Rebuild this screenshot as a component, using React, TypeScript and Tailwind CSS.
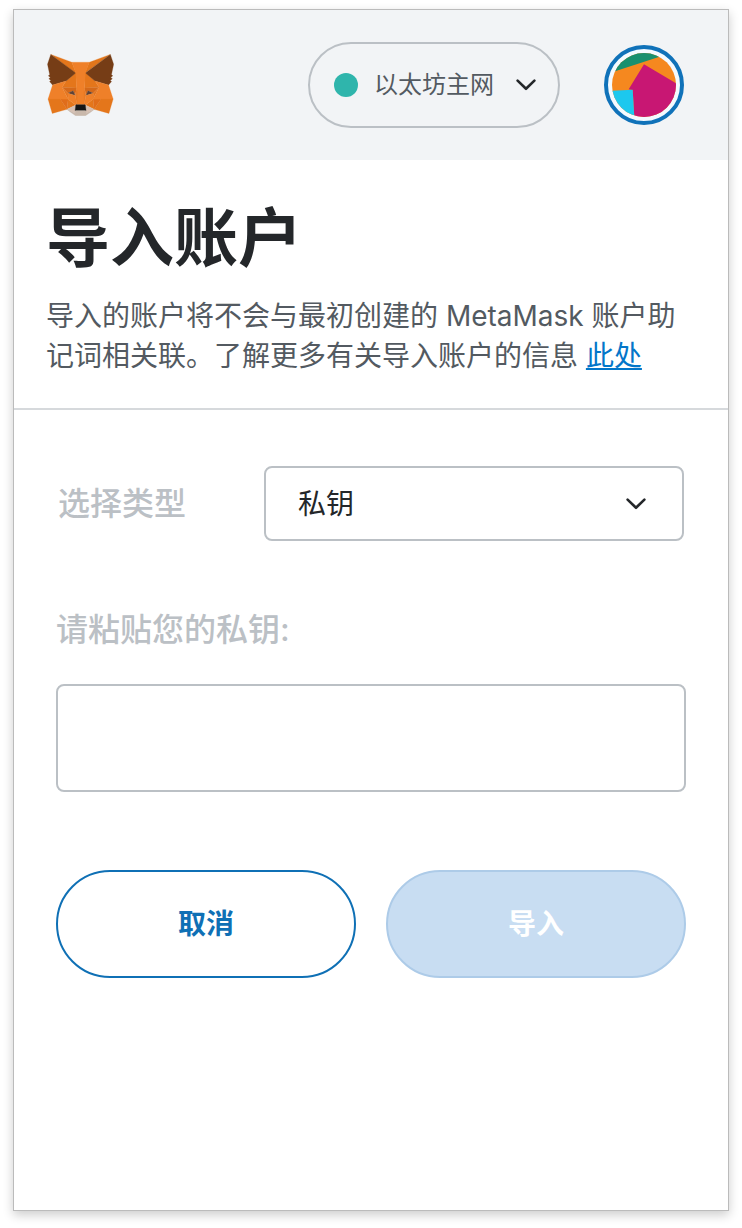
import { useState } from "react";

type Facet = { fill: string; points: string };

const foxFacets: Facet[] = [
  { fill: "#e2761b", points: "274.1,35.5 174.6,109.4 193,65.8" },
  { fill: "#e4761b", points: "44.4,35.5 143.1,110.1 125.6,65.8" },
  { fill: "#e4761b", points: "238.3,206.8 211.8,247.4 268.5,263 284.8,207.7" },
  { fill: "#e4761b", points: "33.9,207.7 50.1,263 106.8,247.4 80.3,206.8" },
  { fill: "#e4761b", points: "103.6,138.2 87.8,162.1 144.1,164.6 142.1,104.1" },
  { fill: "#e4761b", points: "214.9,138.2 175.9,103.4 174.6,164.6 230.8,162.1" },
  { fill: "#e4761b", points: "106.8,247.4 140.6,230.9 111.4,208.1" },
  { fill: "#e4761b", points: "177.9,230.9 211.8,247.4 207.1,208.1" },
  { fill: "#d7c1b3", points: "211.8,247.4 177.9,230.9 180.6,253 180.3,262.3" },
  { fill: "#d7c1b3", points: "106.8,247.4 138.3,262.3 138.1,253 140.6,230.9" },
  { fill: "#e06d1a", points: "106.8,247.4 111.6,206.8 80.3,207.7" },
  { fill: "#e06d1a", points: "207,206.8 211.8,247.4 238.3,207.7" },
  { fill: "#d5691a", points: "230.8,162.1 174.6,164.6 179.8,193.5 188.1,176.1 208.1,185.2" },
  { fill: "#d5691a", points: "110.6,185.2 130.6,176.1 138.8,193.5 144.1,164.6 87.8,162.1" },
  { fill: "#5d4338", points: "138.8,193.5 110.6,185.2 130.5,176.1" },
  { fill: "#5d4338", points: "179.7,193.5 188,176.1 208,185.2" },
  { fill: "#e4751f", points: "87.8,162.1 111.4,208.1 110.6,185.2" },
  { fill: "#e4751f", points: "208.1,185.2 207.1,208.1 230.8,162.1" },
  { fill: "#ef8029", points: "179.8,193.5 173.1,227.6 177.9,230.9 207.1,208.1 208.1,185.2" },
  { fill: "#ef8029", points: "110.6,185.2 111.4,208.1 140.6,230.9 145.4,227.6 138.8,193.5" },
  {
    fill: "#c9b8ab",
    points:
      "180.3,262.3 180.6,253 178.1,250.8 140.4,250.8 138.1,253 138.3,262.3 106.8,247.4 117.8,256.4 140.1,271.9 178.4,271.9 200.8,256.4 211.8,247.4",
  },
  {
    fill: "#161616",
    points: "177.9,230.9 173.1,227.6 145.4,227.6 140.6,230.9 138.1,253 140.4,250.8 178.1,250.8 180.6,253",
  },
  {
    fill: "#763d16",
    points:
      "278.3,114.2 286.8,73.4 274.1,35.5 177.9,106.9 214.9,138.2 267.2,153.5 278.8,140 273.8,136.4 281.8,129.1 275.6,124.3 283.6,118.2",
  },
  {
    fill: "#763d16",
    points:
      "31.8,73.4 40.3,114.2 34.9,118.2 42.9,124.3 36.8,129.1 44.8,136.4 39.8,140 51.3,153.5 103.6,138.2 140.6,106.9 44.4,35.5",
  },
  { fill: "#ef8029", points: "267.2,153.5 214.9,138.2 230.8,162.1 207.1,208.1 238.3,207.7 284.8,207.7" },
  { fill: "#ef8029", points: "103.6,138.2 51.3,153.5 33.9,207.7 80.3,207.7 111.4,208.1 87.8,162.1" },
  {
    fill: "#ef8029",
    points:
      "174.6,164.6 177.9,106.9 193.1,65.8 125.6,65.8 140.6,106.9 144.1,164.6 145.3,182.8 145.4,227.6 173.1,227.6 173.3,182.8",
  },
  { fill: "#e97a24", points: "144.1,164.6 138.8,193.5 145.4,227.6 146.9,182.7" },
  { fill: "#e97a24", points: "174.6,164.6 171.9,182.6 173.1,227.6 179.8,193.5" },
];

function FoxLogo() {
  return (
    <svg viewBox="30 34 258 239" className="h-[62px] w-[67px]" role="img" aria-label="MetaMask">
      {foxFacets.map((facet) => (
        <polygon
          key={facet.points}
          fill={facet.fill}
          stroke={facet.fill}
          strokeWidth="1"
          strokeLinejoin="round"
          points={facet.points}
        />
      ))}
    </svg>
  );
}

function AccountAvatar() {
  return (
    <svg viewBox="48 51 192 192" className="size-16 rounded-full" aria-hidden="true">
      <rect x="48" y="51" width="192" height="192" fill="#f5881f" />
      <polygon points="48,51 225,51 48,109" fill="#18906f" />
      <polygon points="144,85 240,142 240,243 115,243 110,162 98,160" fill="#c81773" />
      <polygon points="48,164 110,161 115,243 48,243" fill="#1cc8ee" />
    </svg>
  );
}

function Chevron({ className }: { className?: string }) {
  return (
    <svg
      viewBox="0 0 20 12"
      className={className}
      fill="none"
      stroke="#24272a"
      strokeWidth="2.6"
      strokeLinecap="round"
      strokeLinejoin="round"
      aria-hidden="true"
    >
      <path d="M1.6 1.6 10 9.8l8.4-8.2" />
    </svg>
  );
}

export default function App() {
  const [type, setType] = useState("private-key");
  const [privateKey, setPrivateKey] = useState("");

  return (
    <div className="flex min-h-screen flex-col bg-white px-[13px] pt-[9px] pb-[17px] font-['Inter','Noto_Sans_CJK_SC',sans-serif] text-[#24272a]">
      <main className="flex grow flex-col border border-[#bbbbbb] bg-white shadow-[0_4px_10px_rgba(0,0,0,0.2)]">
        <header className="flex h-[150px] items-center bg-[#f2f4f6] pr-11 pl-[33px]">
          <FoxLogo />
          <button
            type="button"
            className="ml-auto flex h-[86px] w-[252px] items-center rounded-full border-2 border-[#bbc0c5] pr-[22px] pl-6 text-[24px] leading-8 text-[#535a61]"
          >
            <span className="size-6 rounded-full bg-[#2fb5ac]" />
            <span className="ml-4">以太坊主网</span>
            <Chevron className="ml-auto h-3 w-5" />
          </button>
          <button
            type="button"
            aria-label="账户"
            className="ml-11 flex size-20 items-center justify-center rounded-full border-4 border-[#1072b9] bg-[#f4faff]"
          >
            <AccountAvatar />
          </button>
        </header>

        <section className="border-b-2 border-[#d6d9dc] pt-[38px] pr-11 pb-8 pl-8">
          <h1 className="text-[64px] leading-[80px] font-semibold">导入账户</h1>
          <p className="mt-[18px] text-[28px] leading-10 text-[#535a61]">
            <span>导入的账户将不会与最初创建的 MetaMask 账户助记词相关联。了解更多有关导入账户的信息</span>{" "}
            <a href="#learn-more" className="text-[#0376c9] underline">
              此处
            </a>
          </p>
        </section>

        <form className="px-[42px] pt-14 pb-8" onSubmit={(event) => event.preventDefault()}>
          <div className="flex items-center justify-between px-[2px]">
            <label htmlFor="import-type" className="text-[32px] leading-10 font-medium text-[#bbc0c5]">
              选择类型
            </label>
            <div className="relative w-[420px]">
              <select
                id="import-type"
                value={type}
                onChange={(event) => setType(event.target.value)}
                className="h-[75px] w-full appearance-none rounded-lg border-2 border-[#bbc0c5] bg-white px-8 text-[28px] leading-10"
              >
                <option value="private-key">私钥</option>
              </select>
              <Chevron className="pointer-events-none absolute top-8 right-[38px] h-3 w-5" />
            </div>
          </div>

          <label
            htmlFor="private-key"
            className="mt-[69px] block text-[32px] leading-10 font-medium text-[#bbc0c5]"
          >
            请粘贴您的私钥:
          </label>
          <input
            id="private-key"
            type="password"
            value={privateKey}
            onChange={(event) => setPrivateKey(event.target.value)}
            className="mt-[34px] block h-[108px] w-full rounded-lg border-2 border-[#bbc0c5] px-8 text-[28px]"
          />

          <div className="mt-[78px] grid grid-cols-2 gap-[30px] text-[28px] leading-10 font-bold">
            <button type="button" className="h-[108px] rounded-full border-2 border-[#0f70b5] text-[#0f70b5]">
              取消
            </button>
            <button
              type="submit"
              disabled={privateKey === ""}
              className="h-[108px] rounded-full border-2 border-[#adcbe8] bg-[#c8ddf2] text-white"
            >
              导入
            </button>
          </div>
        </form>
      </main>
    </div>
  );
}
